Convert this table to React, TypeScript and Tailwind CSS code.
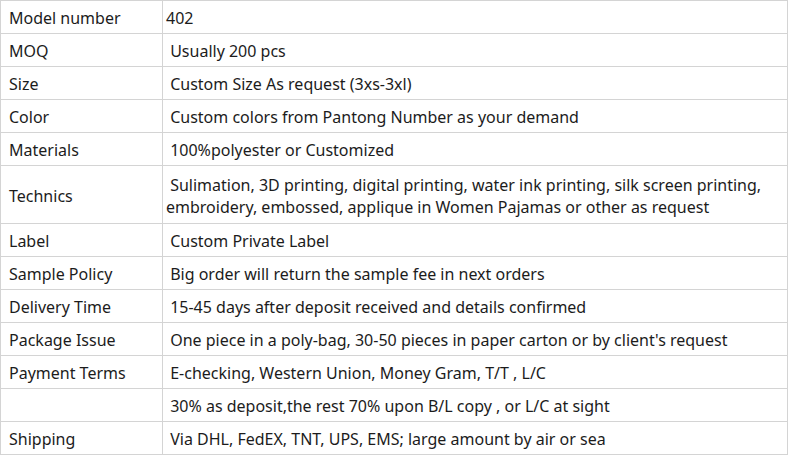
import React from "react";

const rows: { label: string; value: string[]; h?: string }[] = [
  { label: "Model number", value: ["402"] },
  { label: "MOQ", value: [" Usually 200 pcs"] },
  { label: "Size", value: [" Custom Size As request (3xs-3xl)"] },
  { label: "Color", value: [" Custom colors from Pantong Number as your demand"] },
  { label: "Materials", value: [" 100%polyester or Customized"] },
  {
    label: "Technics",
    value: [
      " Sulimation, 3D printing, digital printing, water ink printing, silk screen printing,",
      "embroidery, embossed, applique in Women Pajamas or other as request",
    ],
    h: "h-[58px]",
  },
  { label: "Label", value: [" Custom Private Label"] },
  { label: "Sample Policy", value: [" Big order will return the sample fee in next orders"] },
  { label: "Delivery Time", value: [" 15-45 days after deposit received and details confirmed"] },
  {
    label: "Package Issue",
    value: [" One piece in a poly-bag, 30-50 pieces in paper carton or by client's request"],
  },
  { label: "Payment Terms", value: [" E-checking, Western Union, Money Gram, T/T , L/C"] },
  { label: "", value: [" 30% as deposit,the rest 70% upon B/L copy , or L/C at sight"] },
  { label: "Shipping", value: [" Via DHL, FedEX, TNT, UPS, EMS; large amount by air or sea"] },
];

export default function App() {
  return (
    <div className="w-[789px] h-[456px] bg-white font-['Noto_Sans',sans-serif] text-[16px] text-[#1c1c1c]">
      <div className="w-[788px] border-l border-t border-[#d4d4d4]">
        {rows.map((r, i) => (
          <div key={i} className={`flex ${r.h ?? "h-[33px]"}`}>
            <div className="w-[162px] shrink-0 border-r border-b border-[#d4d4d4] flex items-center pl-2 pt-[2px]">
              {r.label}
            </div>
            <div className="w-[625px] border-r border-b border-[#d4d4d4] flex flex-col justify-center pl-[3px] pt-[2px] leading-[22px] whitespace-pre">
              {r.value.map((v, j) => (
                <div key={j}>{v}</div>
              ))}
            </div>
          </div>
        ))}
      </div>
    </div>
  );
}
